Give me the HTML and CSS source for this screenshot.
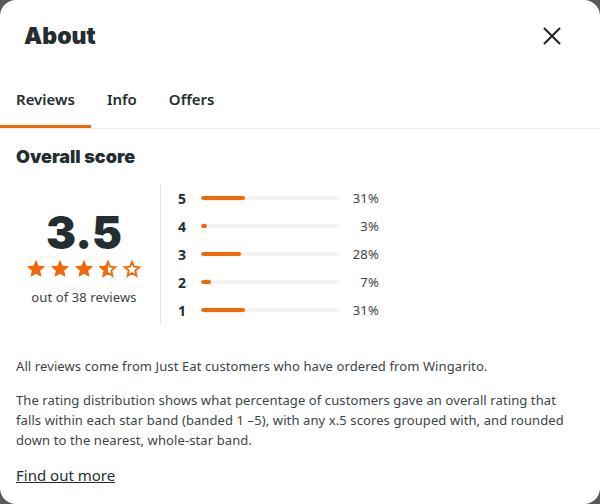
FILE: index.html
```html
<!DOCTYPE html>
<html>
<head>
<meta charset="utf-8">
<link rel="stylesheet" href="styles.css">
</head>
<body>
<div class="modal">
  <header class="head">
    <h1 class="title">About</h1>
    <button class="close" aria-label="Close">
      <svg width="18" height="18" viewBox="0 0 18 18"><path d="M1 1L17 17M17 1L1 17" stroke="#2a2a2a" stroke-width="2.2"/></svg>
    </button>
  </header>
  <nav class="tabs">
    <span class="tab active">Reviews</span>
    <span class="tab">Info</span>
    <span class="tab">Offers</span>
  </nav>
  <section class="body">
    <h2 class="sub">Overall score</h2>
    <div class="score-wrap">
      <div class="score">
        <div class="big">3.5</div>
        <div class="stars">
          <svg width="20" height="19" viewBox="0 0 24 23"><path d="M12 1l3.1 7.2 7.9.7-6 5.2 1.8 7.8L12 17.8 5.2 21.9 7 14.1 1 8.9l7.9-.7z" fill="#f36805"/></svg>
          <svg width="20" height="19" viewBox="0 0 24 23"><path d="M12 1l3.1 7.2 7.9.7-6 5.2 1.8 7.8L12 17.8 5.2 21.9 7 14.1 1 8.9l7.9-.7z" fill="#f36805"/></svg>
          <svg width="20" height="19" viewBox="0 0 24 23"><path d="M12 1l3.1 7.2 7.9.7-6 5.2 1.8 7.8L12 17.8 5.2 21.9 7 14.1 1 8.9l7.9-.7z" fill="#f36805"/></svg>
          <svg width="20" height="19" viewBox="0 0 24 23"><path d="M12 3.5l2.5 5.8 6.3.6-4.8 4.2 1.4 6.2L12 17 6.6 20.3 8 14.1 3.2 9.9l6.3-.6z" fill="none" stroke="#f36805" stroke-width="2.2"/><path d="M12 1L8.9 8.2 1 8.9l6 5.2-1.8 7.8L12 17.8z" fill="#f36805"/></svg>
          <svg width="20" height="19" viewBox="0 0 24 23"><path d="M12 3.5l2.5 5.8 6.3.6-4.8 4.2 1.4 6.2L12 17 6.6 20.3 8 14.1 3.2 9.9l6.3-.6z" fill="none" stroke="#f36805" stroke-width="2.2"/></svg>
        </div>
        <div class="count">out of 38 reviews</div>
      </div>
      <div class="dist">
        <div class="row"><span class="num">5</span><span class="track"><span class="fill" style="width:31.6%"></span></span><span class="pct">31%</span></div>
        <div class="row"><span class="num">4</span><span class="track"><span class="fill" style="width:4%"></span></span><span class="pct">3%</span></div>
        <div class="row"><span class="num">3</span><span class="track"><span class="fill" style="width:28.8%"></span></span><span class="pct">28%</span></div>
        <div class="row"><span class="num">2</span><span class="track"><span class="fill" style="width:7.5%"></span></span><span class="pct">7%</span></div>
        <div class="row"><span class="num">1</span><span class="track"><span class="fill" style="width:31.6%"></span></span><span class="pct">31%</span></div>
      </div>
    </div>
    <p class="para first">All reviews come from Just Eat customers who have ordered from Wingarito.</p>
    <p class="para">The rating distribution shows what percentage of customers gave an overall rating that falls within each star band (banded 1 –5), with any x.5 scores grouped with, and rounded down to the nearest, whole-star band.</p>
    <a class="more" href="#">Find out more</a>
  </section>
</div>
</body>
</html>
```
FILE: styles.css
```css
* { box-sizing: border-box; }
html, body { margin: 0; padding: 0; }
body {
  background: #5a5a5a;
  width: 600px;
  height: 504px;
  overflow: hidden;
  font-family: "Noto Sans", Roboto, sans-serif;
  color: #242e30;
}
.modal {
  width: 600px;
  height: 504px;
  background: #fff;
  border-radius: 16px;
  overflow: hidden;
}
.head {
  display: flex;
  align-items: center;
  justify-content: space-between;
  height: 76px;
  padding: 0 39px 4px 24px;
}
.title {
  margin: 0;
  font-family: Inter, "Noto Sans", sans-serif;
  font-weight: 900;
  font-size: 23px;
  color: #242e30;
}
.close {
  border: 0;
  background: none;
  padding: 0;
  width: 18px;
  height: 18px;
  display: flex;
}
.tabs {
  display: flex;
  height: 53px;
  border-bottom: 1px solid #ebebeb;
}
.tab {
  display: flex;
  align-items: center;
  padding: 0 16px 4px;
  font-size: 15px;
  font-weight: 600;
  color: #242e30;
  border-bottom: 3px solid transparent;
}
.tab.active { border-bottom-color: #f36805; }
.body { padding: 0 16px; }
.sub {
  margin: 16px 0 0;
  font-family: Inter, "Noto Sans", sans-serif;
  font-weight: 900;
  font-size: 18px;
  line-height: 24px;
  color: #242e30;
}
.score-wrap {
  display: flex;
  margin-top: 15px;
}
.score {
  width: 136px;
  margin-right: 8px;
  display: flex;
  flex-direction: column;
  align-items: center;
  padding-top: 25px;
}
.big {
  font-family: Inter, "Noto Sans", sans-serif;
  font-weight: 900;
  font-size: 45px;
  line-height: 48px;
  color: #242e30;
}
.stars {
  display: flex;
  gap: 4px;
  margin-top: 2px;
}
.stars svg { display: block; }
.count {
  margin-top: 10px;
  font-size: 13px;
  line-height: 18px;
  letter-spacing: 0.1px;
  color: #3c4446;
}
.dist {
  border-left: 1px solid #e6e6e6;
  padding-left: 17px;
}
.row {
  display: flex;
  align-items: center;
  height: 28px;
}
.num {
  width: 23px;
  font-size: 14px;
  font-weight: 700;
  color: #242e30;
}
.track {
  width: 139px;
  height: 4px;
  border-radius: 2px;
  background: #f5f3f1;
  overflow: hidden;
}
.fill {
  display: block;
  height: 100%;
  background: #f36805;
  border-radius: 2px;
}
.pct {
  width: 39px;
  text-align: right;
  font-size: 13px;
  letter-spacing: 0.2px;
  color: #3c4446;
}
.para {
  margin: 0;
  max-width: 558px;
  font-size: 13px;
  line-height: 20px;
  letter-spacing: 0.1px;
  color: #3c4446;
}
.para.first { margin-top: 32px; margin-bottom: 14px; }
.more {
  display: inline-block;
  margin-top: 15px;
  font-size: 15px;
  line-height: 20px;
  color: #242e30;
  text-decoration: underline;
}
```
